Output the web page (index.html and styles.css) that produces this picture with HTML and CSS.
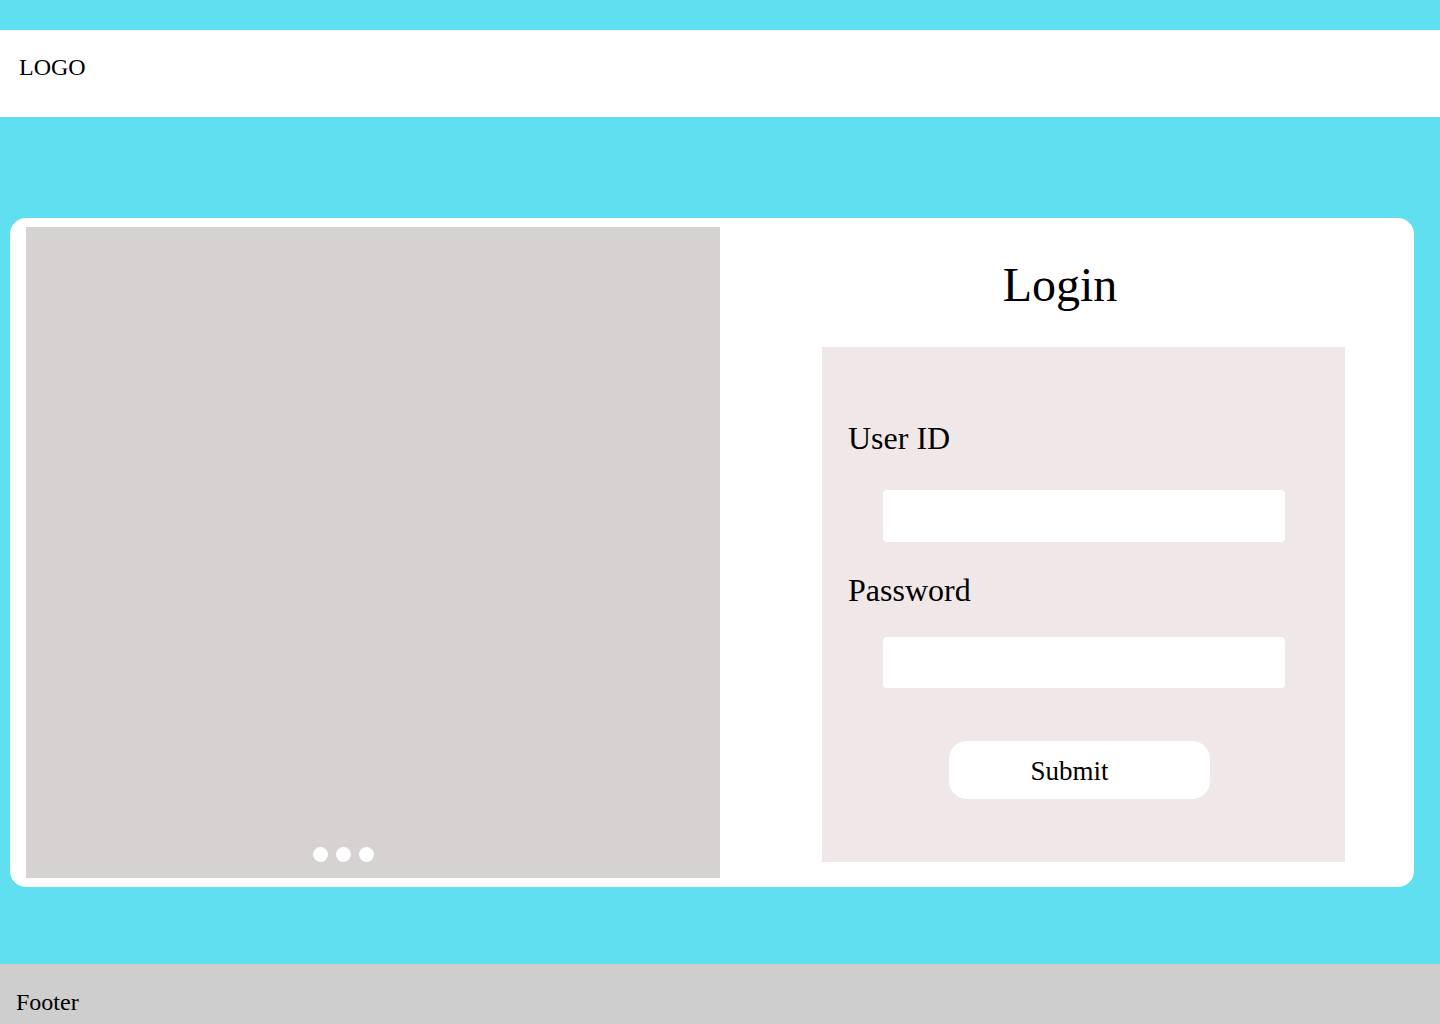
FILE: index.html
```html
<!DOCTYPE html>
<html lang="en">
<head>
<meta charset="utf-8">
<title>Login</title>
<link rel="stylesheet" href="styles.css">
</head>
<body>
  <header class="site-header">
    <div class="logo">LOGO</div>
  </header>
  <main class="main">
    <section class="card">
      <div class="slider">
        <div class="dots">
          <span class="dot"></span>
          <span class="dot"></span>
          <span class="dot"></span>
        </div>
      </div>
      <div class="login-col">
        <h1 class="login-title">Login</h1>
        <form class="login-form" onsubmit="return false;">
          <label class="field-label label-user" for="uid">User ID</label>
          <input class="field-input input-user" id="uid" type="text">
          <label class="field-label label-pass" for="pwd">Password</label>
          <input class="field-input input-pass" id="pwd" type="password">
          <button class="submit-btn" type="submit">Submit</button>
        </form>
      </div>
    </section>
  </main>
  <footer class="site-footer">Footer</footer>
</body>
</html>
```

FILE: styles.css
```css
* {
  box-sizing: border-box;
}

html, body {
  margin: 0;
  padding: 0;
}

body {
  background: #5fdfef;
  font-family: "Liberation Serif", "Times New Roman", serif;
  color: #000;
  padding-top: 30px;
  height: 1024px;
  overflow: hidden;
}

.site-header {
  background: #ffffff;
  height: 87px;
  padding: 25px 0 0 19px;
}

.logo {
  font-size: 24px;
  line-height: 24px;
}

.main {
  padding: 101px 26px 0 10px;
  height: 847px;
}

.card {
  display: flex;
  background: #ffffff;
  border-radius: 16px;
  padding: 9px 14px 9px 16px;
  height: 669px;
}

.slider {
  position: relative;
  width: 694px;
  height: 651px;
  background: #d6d2d2;
  flex: none;
}

.dots {
  position: absolute;
  left: 287px;
  bottom: 16px;
  display: flex;
  gap: 8px;
}

.dot {
  width: 15px;
  height: 15px;
  border-radius: 50%;
  background: #ffffff;
}

.login-col {
  flex: 1;
  display: flex;
  flex-direction: column;
}

.login-title {
  margin: 34px 0 0 0;
  font-size: 48px;
  line-height: 48px;
  font-weight: normal;
  text-align: center;
}

.login-form {
  margin: 38px 0 0 102px;
  width: 523px;
  height: 515px;
  background: #f0e7e8;
  padding: 75px 0 0 26px;
  display: flex;
  flex-direction: column;
  align-items: flex-start;
}

.field-label {
  font-size: 32px;
  line-height: 32px;
}

.field-input {
  width: 402px;
  margin-left: 35px;
  border: none;
  border-radius: 4px;
  background: #ffffff;
  outline: none;
  padding: 0 10px;
  font-family: inherit;
  font-size: 20px;
}

.input-user {
  margin-top: 36px;
  height: 52px;
}

.label-pass {
  margin-top: 32px;
}

.input-pass {
  margin-top: 31px;
  height: 51px;
}

.submit-btn {
  margin: 53px 0 0 101px;
  width: 261px;
  height: 58px;
  border: none;
  border-radius: 18px;
  background: #ffffff;
  font-family: inherit;
  font-size: 27px;
  line-height: 60px;
  padding: 0 20px 0 0;
  text-align: center;
  color: #000;
  cursor: pointer;
}

.site-footer {
  background: #cecece;
  height: 60px;
  padding: 26px 0 0 16px;
  font-size: 24px;
  line-height: 24px;
}
```
